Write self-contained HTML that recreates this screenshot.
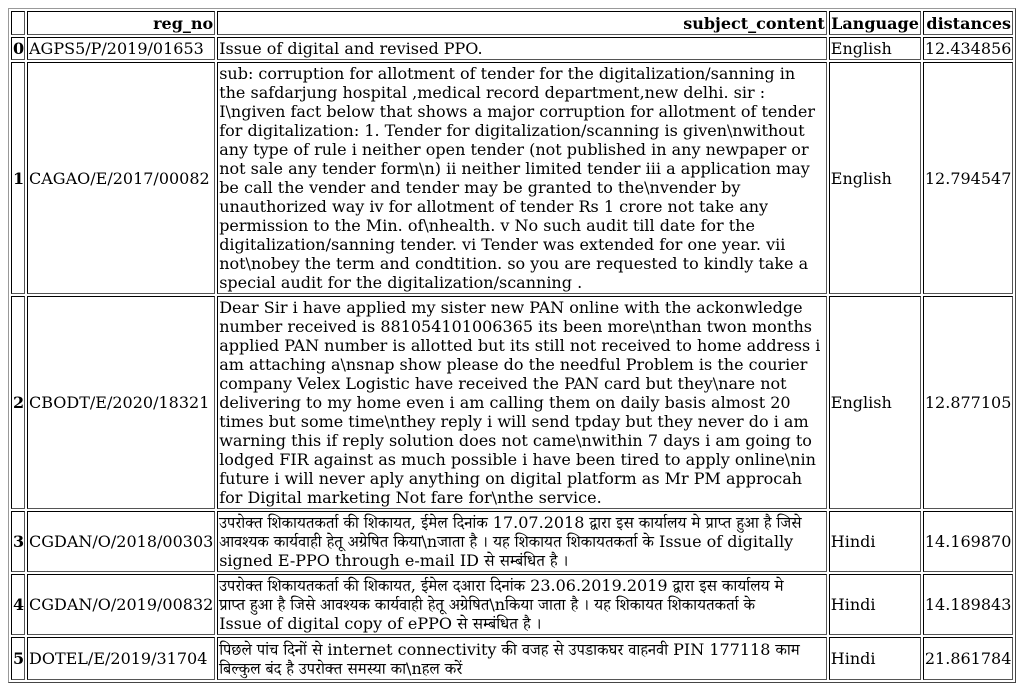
<!DOCTYPE html>
<html><head><meta charset="utf-8"><style>
body{margin:8px;background:#fff;}
table{border-collapse:separate;border-spacing:2px;border:1px outset #999;table-layout:fixed;width:1008px;font-family:"DejaVu Serif","Liberation Serif","Noto Serif CJK SC",serif;font-size:16px;line-height:19px;color:#000;}
td,th{border:1px inset #555;padding:1px;box-sizing:border-box;white-space:nowrap;overflow:hidden;vertical-align:middle;}
thead th{text-align:right;}
tbody th{text-align:left;}
td{text-align:left;}
.h{font-family:"DejaVu Serif","Noto Serif Devanagari","Lohit Devanagari",serif;}
</style></head><body>
<table>
<colgroup><col style="width:14px"><col style="width:188px"><col style="width:609px"><col style="width:92px"><col style="width:90px"></colgroup>
<thead><tr style="height:24px"><th></th><th>reg_no</th><th>subject_content</th><th>Language</th><th>distances</th></tr></thead>
<tbody>
<tr style="height:23px"><th>0</th><td>AGPS5/P/2019/01653</td><td>Issue of digital and revised PPO.</td><td>English</td><td>12.434856</td></tr>
<tr style="height:232px"><th>1</th><td>CAGAO/E/2017/00082</td><td>sub: corruption for allotment of tender for the digitalization/sanning in<br>the safdarjung hospital ,medical record department,new delhi. sir :<br>I\ngiven fact below that shows a major corruption for allotment of tender<br>for digitalization: 1. Tender for digitalization/scanning is given\nwithout<br>any type of rule i neither open tender (not published in any newpaper or<br>not sale any tender form\n) ii neither limited tender iii a application may<br>be call the vender and tender may be granted to the\nvender by<br>unauthorized way iv for allotment of tender Rs 1 crore not take any<br>permission to the Min. of\nhealth. v No such audit till date for the<br>digitalization/sanning tender. vi Tender was extended for one year. vii<br>not\nobey the term and condtition. so you are requested to kindly take a<br>special audit for the digitalization/scanning .</td><td>English</td><td>12.794547</td></tr>
<tr style="height:212px"><th>2</th><td>CBODT/E/2020/18321</td><td>Dear Sir i have applied my sister new PAN online with the ackonwledge<br>number received is 881054101006365 its been more\nthan twon months<br>applied PAN number is allotted but its still not received to home address i<br>am attaching a\nsnap show please do the needful Problem is the courier<br>company Velex Logistic have received the PAN card but they\nare not<br>delivering to my home even i am calling them on daily basis almost 20<br>times but some time\nthey reply i will send tpday but they never do i am<br>warning this if reply solution does not came\nwithin 7 days i am going to<br>lodged FIR against as much possible i have been tired to apply online\nin<br>future i will never aply anything on digital platform as Mr PM approcah<br>for Digital marketing Not fare for\nthe service.</td><td>English</td><td>12.877105</td></tr>
<tr style="height:60px"><th>3</th><td>CGDAN/O/2018/00303</td><td class="h">उपरोक्त शिकायतकर्ता की शिकायत, ईमेल दिनांक 17.07.2018 द्वारा इस कार्यालय मे प्राप्त हुआ है जिसे<br>आवश्यक कार्यवाही हेतू अग्रेषित किया\nजाता है । यह शिकायत शिकायतकर्ता के Issue of digitally<br>signed E-PPO through e-mail ID से सम्बंधित है ।</td><td>Hindi</td><td>14.169870</td></tr>
<tr style="height:60px"><th>4</th><td>CGDAN/O/2019/00832</td><td class="h">उपरोक्त शिकायतकर्ता की शिकायत, ईमेल दआरा दिनांक 23.06.2019.2019 द्वारा इस कार्यालय मे<br>प्राप्त हुआ है जिसे आवश्यक कार्यवाही हेतू अग्रेषित\nकिया जाता है । यह शिकायत शिकायतकर्ता के<br>Issue of digital copy of ePPO से सम्बंधित है ।</td><td>Hindi</td><td>14.189843</td></tr>
<tr style="height:43px"><th>5</th><td>DOTEL/E/2019/31704</td><td class="h">पिछले पांच दिनों से internet connectivity की वजह से उपडाकघर वाहनवी PIN 177118 काम<br>बिल्कुल बंद है उपरोक्त समस्या का\nहल करें</td><td>Hindi</td><td>21.861784</td></tr>
</tbody></table>
</body></html>
